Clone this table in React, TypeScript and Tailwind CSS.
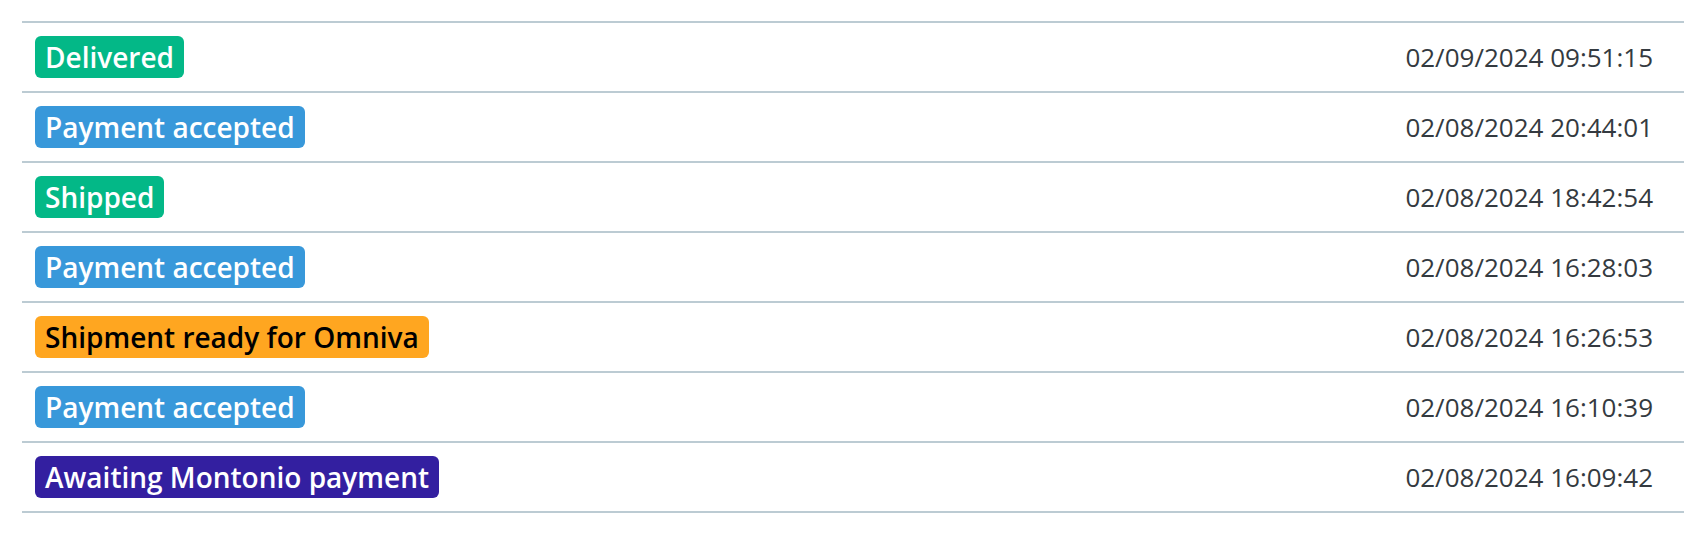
import React from "react";

type Row = { label: string; cls: string; date: string };

const rows: Row[] = [
  { label: "Delivered", cls: "bg-[#03b887] text-white", date: "02/09/2024 09:51:15" },
  { label: "Payment accepted", cls: "bg-[#3898da] text-white", date: "02/08/2024 20:44:01" },
  { label: "Shipped", cls: "bg-[#03b887] text-white", date: "02/08/2024 18:42:54" },
  { label: "Payment accepted", cls: "bg-[#3898da] text-white", date: "02/08/2024 16:28:03" },
  { label: "Shipment ready for Omniva", cls: "bg-[#ffa620] text-black", date: "02/08/2024 16:26:53" },
  { label: "Payment accepted", cls: "bg-[#3898da] text-white", date: "02/08/2024 16:10:39" },
  { label: "Awaiting Montonio payment", cls: "bg-[#331fa0] text-white", date: "02/08/2024 16:09:42" },
];

export default function App() {
  return (
    <div className="w-[1684px] h-[546px] bg-white pt-[21px] pl-[22px] overflow-hidden" style={{ fontFamily: '"Open Sans", "Liberation Sans", sans-serif' }}>
      <div className="border-t-2 border-[#bccbd3]">
        {rows.map((r, i) => (
          <div key={i} className="flex items-center justify-between h-[70px] border-b-2 border-[#bccbd3] pl-[13px] pr-[31px]">
            <span className={`inline-flex items-center h-[42px] px-[10px] rounded-[6px] text-[28px] font-semibold leading-none ${r.cls}`}>
              {r.label}
            </span>
            <span className="text-[26px] text-[#343a40] leading-none">{r.date}</span>
          </div>
        ))}
      </div>
    </div>
  );
}
